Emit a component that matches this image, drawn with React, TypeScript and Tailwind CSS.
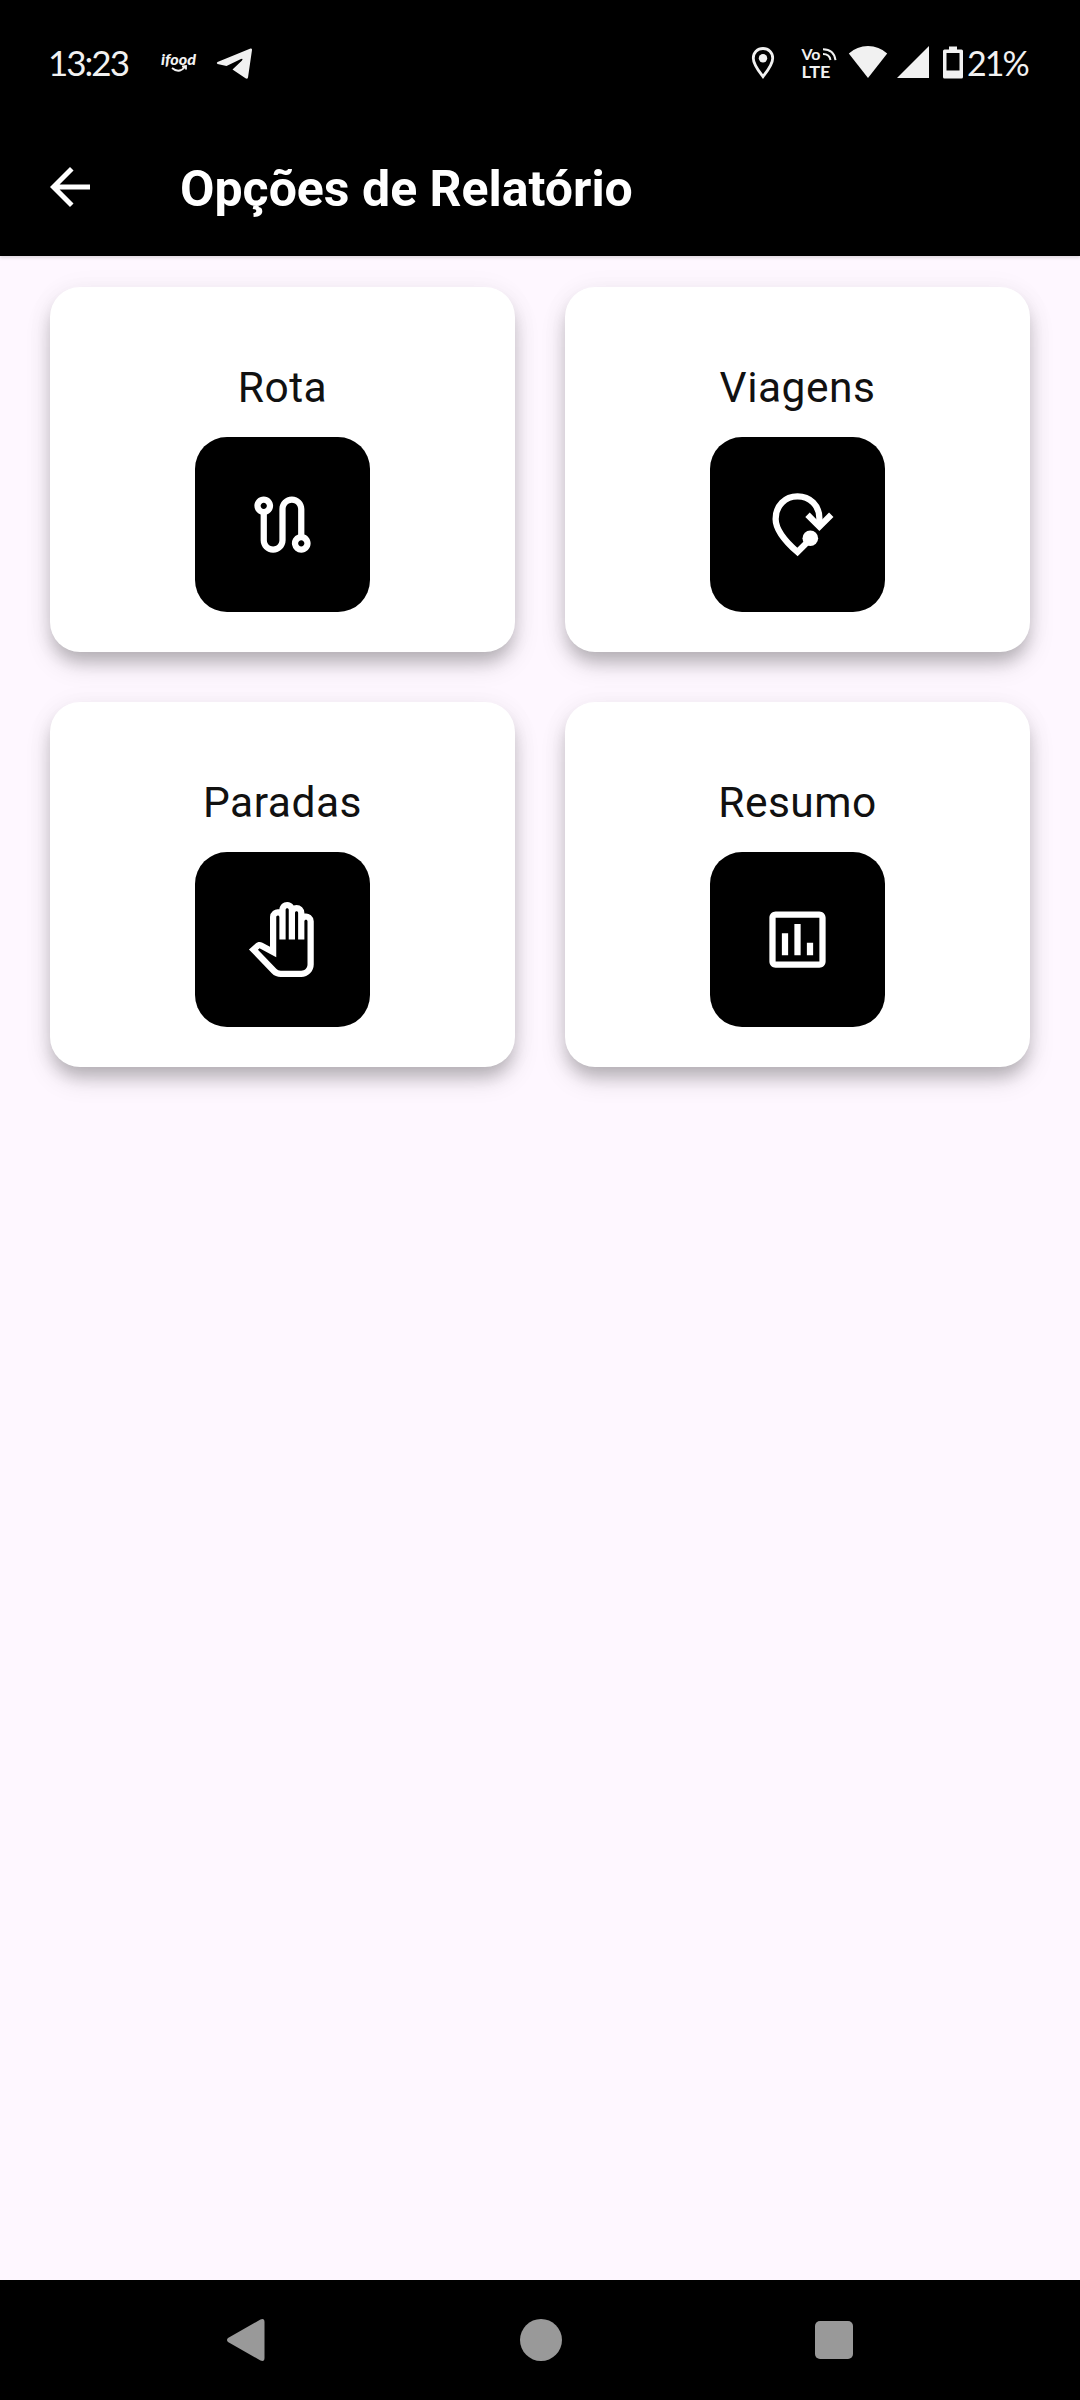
import type { ComponentType } from 'react';
import { MdArrowBack, MdOutlineAssessment, MdOutlinePanTool, MdOutlineRoute } from 'react-icons/md';

interface ReportOption {
  id: string;
  label: string;
  icon: ComponentType<{ size?: number }>;
}

function TripIcon({ size = 24 }: { size?: number }) {
  return (
    <svg width={size} height={size} viewBox="0 0 24 24" fill="none" stroke="currentColor" strokeWidth="2">
      <path d="M19 12.200V10c0-4.100-3-7-7-7s-7 3-7 7.200c0 3 2.200 6.400 7 10.600l4-4" />
      <path d="m15.200 8.900 3.800 3.800 3.800-3.800" />
      <circle cx="16.100" cy="16.400" r="2.500" fill="currentColor" stroke="none" />
    </svg>
  );
}

const options: ReportOption[] = [
  { id: 'route', label: 'Rota', icon: MdOutlineRoute },
  { id: 'trips', label: 'Viagens', icon: TripIcon },
  { id: 'stops', label: 'Paradas', icon: MdOutlinePanTool },
  { id: 'summary', label: 'Resumo', icon: MdOutlineAssessment },
];

function StatusBar() {
  return (
    <div className="flex h-[116px] items-start justify-between pt-[42px] pr-[50px] pl-[48px] font-['Lato','Roboto',sans-serif] text-[35px] leading-[42px] text-[#f1f1f1]">
      <div className="flex items-center">
        <span className="w-[112px] pb-[2px] leading-[40px] tracking-[-2px]">13:23</span>
        {/* iFood */}
        <svg width="38" height="42" viewBox="0 0 38 42" fill="currentColor">
          <text
            x="1"
            y="23"
            fontFamily="Lato, sans-serif"
            fontSize="15"
            fontWeight="900"
            fontStyle="italic"
            textLength="35"
            lengthAdjust="spacingAndGlyphs"
          >
            ifood
          </text>
          <path d="M12 26q7 6 13-1M22 24.5l4-.5v3.500" fill="none" stroke="currentColor" strokeWidth="1.800" />
        </svg>
        {/* Telegram */}
        <svg className="ml-[18px]" width="38" height="42" viewBox="0 0 38 42" fill="currentColor">
          <path d="M1.500 20 34.500 6.500q1.800-.5 1.500 1.500L32 35.500q-.6 2-2.500.8L16.500 27.500 26 18.500q1.500-2.500-1-1.500L10.500 24 1.500 22q-1.500-1 0-2Z" />
        </svg>
      </div>

      <div className="flex items-center">
        {/* Location */}
        <svg width="24" height="42" viewBox="0 0 24 42">
          <path
            d="M12 6.500c-5.600 0-9.700 4.300-9.700 9.700 0 6.400 5.900 13.400 9.700 18.400 3.800-5 9.700-12 9.700-18.400 0-5.400-4.100-9.700-9.700-9.700Z"
            fill="none"
            stroke="currentColor"
            strokeWidth="2.800"
          />
          <circle cx="12" cy="16.200" r="4.200" fill="currentColor" />
        </svg>
        {/* VoLTE */}
        <svg className="ml-[26px]" width="36" height="42" viewBox="0 0 36 42" fill="currentColor">
          <g fontFamily="Lato, sans-serif" fontWeight="700">
            <text x="0.500" y="17.500" fontSize="16" textLength="19" lengthAdjust="spacingAndGlyphs">
              Vo
            </text>
            <text x="0.500" y="35.500" fontSize="17" textLength="29" lengthAdjust="spacingAndGlyphs">
              LTE
            </text>
          </g>
          <g fill="none" stroke="currentColor" strokeWidth="2">
            <path d="M22 7.200q11 0 12.500 11" />
            <path d="M22 12q6.500 0 7.500 6" />
          </g>
        </svg>
        {/* Wi-Fi */}
        <svg className="ml-[11px]" width="40" height="42" viewBox="0 0 40 42" fill="currentColor">
          <path d="M20 36 .8 11.500Q9 4 20 4t19.200 7.500Z" />
        </svg>
        {/* Signal */}
        <svg className="ml-[8px]" width="34" height="42" viewBox="0 0 34 42" fill="currentColor">
          <path d="M1 36 33 4v32Z" />
        </svg>
        {/* Battery */}
        <svg className="ml-[13px]" width="20" height="42" viewBox="0 0 20 42" fill="currentColor">
          <path
            fillRule="evenodd"
            d="M6 4.500h8v3h4.500q1.500 0 1.500 1.500v26q0 1.500-1.500 1.500h-17Q0 36.500 0 35V9q0-1.500 1.500-1.500H6ZM3.500 11v17.500h13V11Z"
          />
        </svg>
        <span className="ml-[4px] w-[63px] text-[34px] tracking-[-2px]">21%</span>
      </div>
    </div>
  );
}

function AppBar() {
  return (
    <header className="flex h-[140px] items-center pt-[2px] pl-[40px] text-white">
      <button aria-label="Voltar">
        <MdArrowBack size={60} />
      </button>
      <h1 className="mt-[4px] ml-[80px] text-[50px] leading-[60px] font-bold">Opções de Relatório</h1>
    </header>
  );
}

function OptionCard({ option }: { option: ReportOption }) {
  const Icon = option.icon;

  return (
    <div className="flex h-[365px] flex-col items-center rounded-[30px] bg-white pt-[71px] shadow-[0_12px_16px_-3px_rgba(0,0,0,0.18),0_13px_26px_rgba(0,0,0,0.13),0_2px_30px_rgba(0,0,0,0.04)]">
      <span className="text-[42.500px] leading-[60px] tracking-[0.500px] text-[#111]">{option.label}</span>
      <button
        aria-label={option.label}
        className="mt-[19px] flex size-[175px] items-center justify-center rounded-[32px] bg-black text-white"
      >
        <Icon size={75} />
      </button>
    </div>
  );
}

function NavigationBar() {
  return (
    <nav className="flex h-[120px] items-center justify-between bg-black pr-[227px] pl-[226px] text-[#999]">
      <svg width="40" height="44" viewBox="0 0 40 44" fill="currentColor">
        <path d="M2 20 34.500 1.500Q38.500 0 38.500 4v36q0 4-4 2.500L2 24q-2-2 0-4Z" />
      </svg>
      <div className="size-[42px] rounded-full bg-[#999]" />
      <div className="size-[38px] rounded-[5px] bg-[#999]" />
    </nav>
  );
}

export default function App() {
  return (
    <div className="flex h-[2400px] w-[1080px] flex-col bg-[#fef7ff] font-['Roboto',sans-serif]">
      <div className="bg-black shadow-[0_2px_3px_rgba(0,0,0,0.12)]">
        <StatusBar />
        <AppBar />
      </div>
      <main className="grid flex-1 grid-cols-2 content-start gap-[50px] px-[50px] pt-[31px]">
        {options.map((option) => (
          <OptionCard key={option.id} option={option} />
        ))}
      </main>
      <NavigationBar />
    </div>
  );
}
